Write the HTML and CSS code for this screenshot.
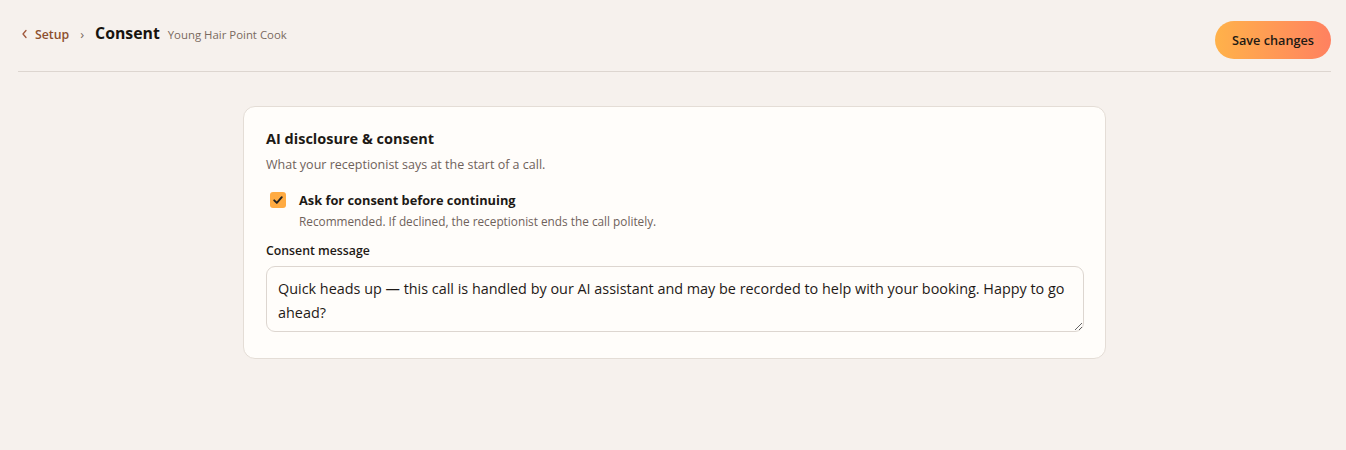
FILE: index.html
```html
<!DOCTYPE html>
<html>
  <head>
    <title>Consent</title>
    <link rel="stylesheet" href="styles.css">
  </head>
  <body>
    <div class="topBar">
      <div class="crumbs">
        <a class="back" href="#"><svg class="chev" width="7" height="10" viewBox="0 0 7 10"><path d="M5 1.5 L2 5 L5 8.5" fill="none" stroke="#a0573a" stroke-width="1.3" stroke-linecap="round" stroke-linejoin="round"/></svg>Setup</a>
        <span class="sep">&rsaquo;</span>
        <h1>Consent</h1>
        <span class="biz">Young Hair Point Cook</span>
      </div>
      <button class="saveBtn">Save changes</button>
    </div>

    <div class="main">
      <div class="card">
        <h2>AI disclosure &amp; consent</h2>
        <p class="sub">What your receptionist says at the start of a call.</p>

        <label class="checkRow">
          <span class="box">
            <svg width="12" height="12" viewBox="0 0 12 12"><path d="M2.2 6.3 L4.8 8.9 L9.8 3.2" fill="none" stroke="#222" stroke-width="1.9" stroke-linecap="round" stroke-linejoin="round"/></svg>
          </span>
          <span>
            <span class="checkLabel">Ask for consent before continuing</span>
            <span class="help">Recommended. If declined, the receptionist ends the call politely.</span>
          </span>
        </label>

        <div class="fieldLabel">Consent message</div>
        <textarea class="msg">Quick heads up — this call is handled by our AI assistant and may be recorded to help with your booking. Happy to go ahead?</textarea>
      </div>
    </div>
  </body>
</html>
```

FILE: styles.css
```css
body {
  margin: 0;
  background-color: #f6f1ed;
  font-family: "Open Sans", "Noto Sans", sans-serif;
  color: #1f1a17;
}

.topBar {
  margin: 0 15px 0 18px;
  height: 71px;
  border-bottom: 1px solid #ddd6d0;
  display: flex;
  align-items: center;
  justify-content: space-between;
  padding-left: 3px;
}

.crumbs {
  display: flex;
  align-items: baseline;
  margin-top: -5px;
}

.back {
  color: #8c4f2e;
  text-decoration: none;
  font-size: 12.3px;
  font-weight: 600;
}
.back .chev {
  margin-right: 7px;
}

.sep {
  color: #7a6a60;
  font-size: 13px;
  margin: 0 11px 0 11px;
}

h1 {
  margin: 0;
  font-size: 15.8px;
  font-weight: 700;
  color: #17130f;
}

.biz {
  margin-left: 8px;
  font-size: 11.4px;
  color: #7a6a60;
}

.saveBtn {
  border: none;
  border-radius: 19px;
  height: 38px;
  padding: 0 17px;
  background: linear-gradient(90deg, #ffb24a, #ff8160);
  color: #221a14;
  font-family: inherit;
  font-size: 12.7px;
  font-weight: 600;
  margin-top: 8px;
}

.main {
  display: flex;
  justify-content: center;
  padding: 34px 0 0 3px;
}

.card {
  width: 818px;
  background-color: #fffdfa;
  border: 1px solid #e4ddd6;
  border-radius: 12px;
  padding: 22px 21px 26px 22px;
}

h2 {
  margin: 0;
  font-size: 14.5px;
  font-weight: 700;
  color: #1d1915;
}

.sub {
  margin: 8px 0 0 0;
  font-size: 12.5px;
  color: #6f625a;
}

.checkRow {
  display: flex;
  gap: 13px;
  margin-top: 18px;
  padding-left: 4px;
}

.box {
  width: 16px;
  height: 16px;
  border-radius: 3px;
  background-color: #ffab42;
  display: flex;
  align-items: center;
  justify-content: center;
  margin-top: 1px;
  flex-shrink: 0;
}

.checkLabel {
  display: block;
  font-size: 12.8px;
  font-weight: 700;
  color: #1d1915;
}

.help {
  display: block;
  margin-top: 4px;
  font-size: 11.8px;
  color: #6f625a;
}

.fieldLabel {
  margin-top: 13px;
  font-size: 12.3px;
  font-weight: 600;
  color: #1d1915;
}

.msg {
  display: block;
  margin-top: 7px;
  width: 100%;
  box-sizing: border-box;
  height: 66px;
  border: 1px solid #ddd6d0;
  border-radius: 9px;
  background-color: #fffdfa;
  padding: 10px 11px 6px 11px;
  font-family: inherit;
  font-size: 14.4px;
  line-height: 24px;
  color: #1f1a17;
}
```
